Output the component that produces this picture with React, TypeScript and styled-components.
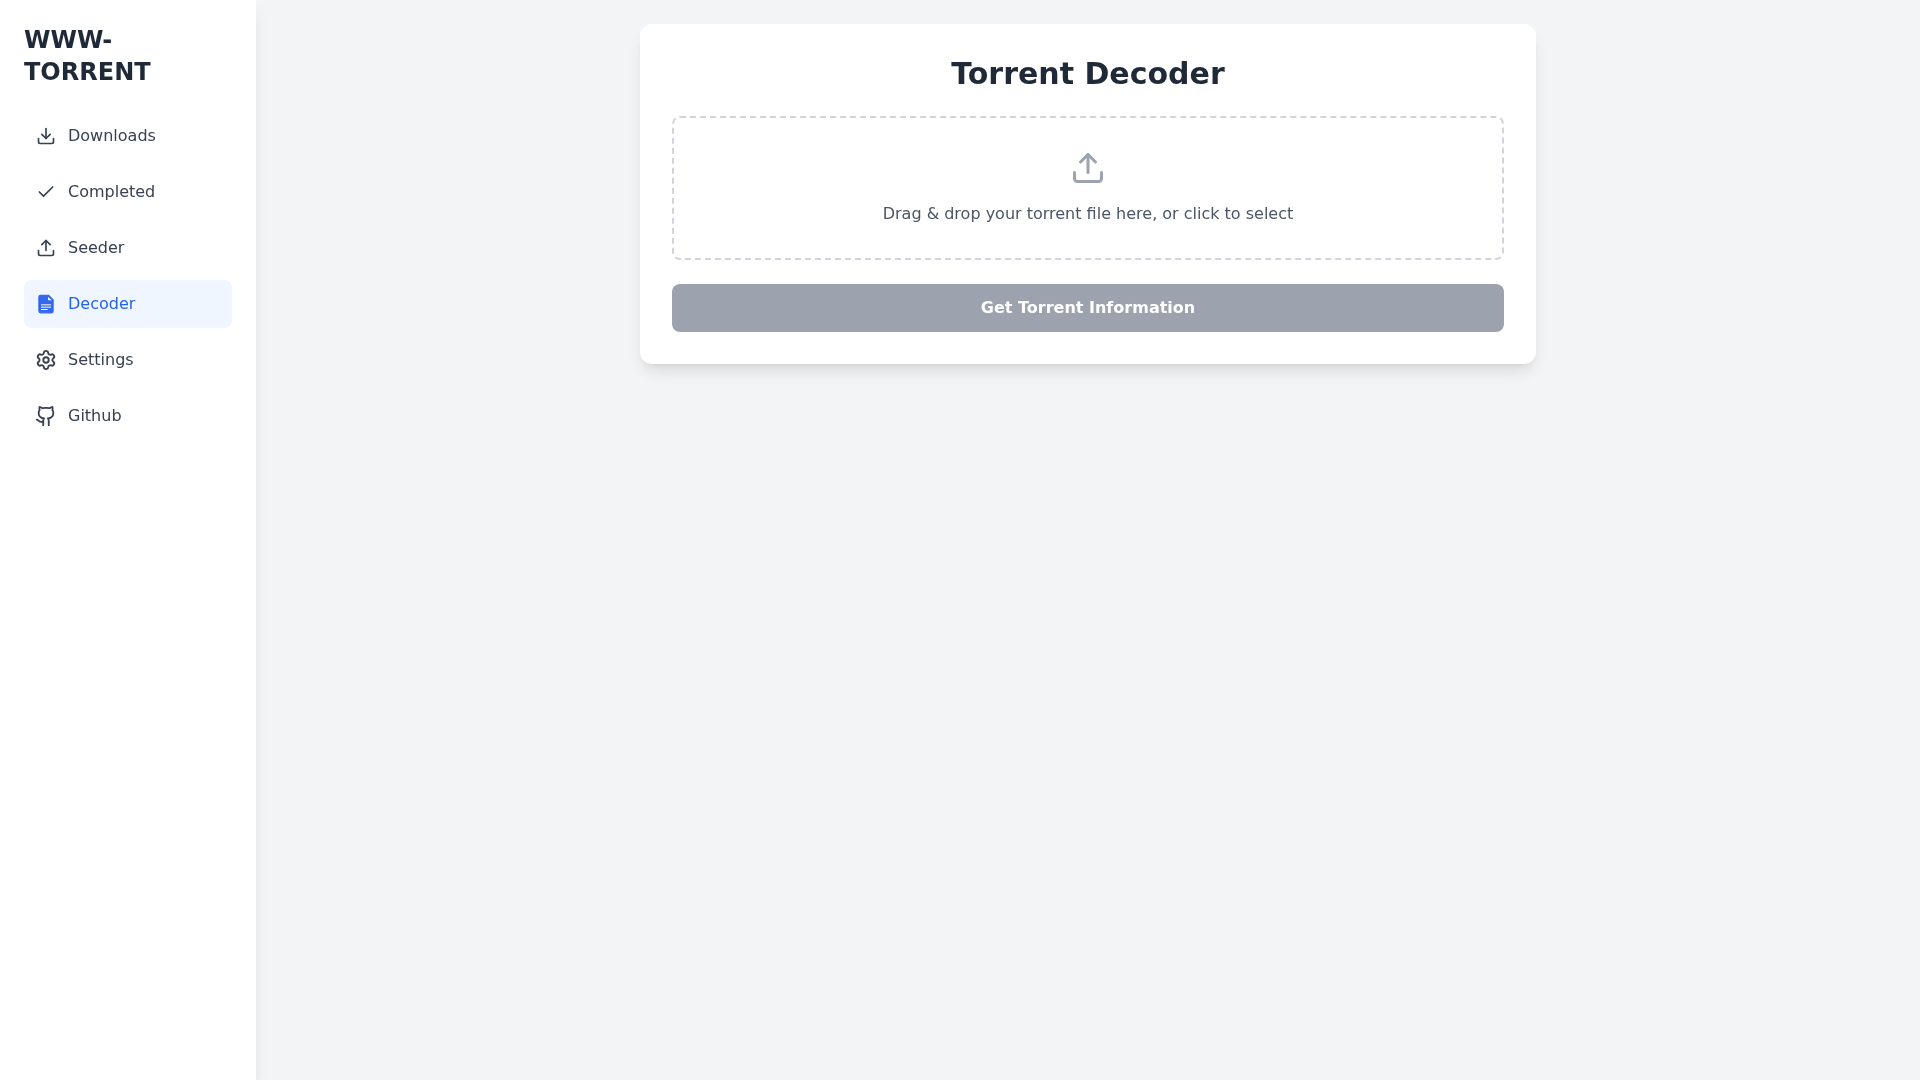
import styled, { createGlobalStyle } from "styled-components";
import { Check, Download, Github, Settings, Upload } from "lucide-react";

const GlobalStyle = createGlobalStyle`
  * {
    box-sizing: border-box;
  }
  body {
    margin: 0;
    font-family: "DejaVu Sans", sans-serif;
    background: #f3f4f6;
  }
`;

// layout
const Layout = styled.div`
  display: flex;
  min-height: 100vh;
  will-change: transform;
`;
const Sidebar = styled.aside`
  width: 256px;
  flex-shrink: 0;
  padding: 24px;
  background: white;
  box-shadow: 0 10px 15px -3px rgba(0, 0, 0, 0.1), 0 4px 6px -4px rgba(0, 0, 0, 0.1);
`;
const Logo = styled.h1`
  margin: 0 0 24px;
  font-size: 24px;
  line-height: 32px;
  font-weight: 700;
  color: #1f2937;
`;
const Nav = styled.nav`
  display: flex;
  flex-direction: column;
  gap: 8px;
`;
const NavItem = styled.a<{ $active?: boolean }>`
  display: flex;
  align-items: center;
  gap: 12px;
  padding: 12px;
  border-radius: 8px;
  font-size: 16px;
  line-height: 24px;
  color: ${props => (props.$active ? "#2563eb" : "#374151")};
  background: ${props => (props.$active ? "#eff6ff" : "transparent")};

  svg {
    flex-shrink: 0;
    color: ${props => (props.$active ? "#3468ee" : "#374151")};
  }
`;
// these two sit a little larger than the rest of the set
const GearIcon = styled(Settings)`
  transform: scale(1.1);
`;
const GithubIcon = styled(Github)`
  transform: scale(1.1);
`;

// main
const Main = styled.main`
  flex: 1;
  padding: 24px;
`;
const Card = styled.section`
  max-width: 896px;
  margin: 0 auto;
  padding: 32px;
  background: white;
  border-radius: 12px;
  box-shadow: 0 10px 15px -3px rgba(0, 0, 0, 0.1), 0 4px 6px -4px rgba(0, 0, 0, 0.1);
`;
const Title = styled.h2`
  margin: 0 0 24px;
  font-size: 30px;
  line-height: 36px;
  font-weight: 700;
  text-align: center;
  color: #1f2937;
`;
const DropZone = styled.div`
  display: flex;
  flex-direction: column;
  align-items: center;
  gap: 16px;
  padding: 32px;
  border: 2px dashed #d1d5db;
  border-radius: 8px;
  color: #9ca3af;
`;
const DropText = styled.p`
  margin: 0;
  font-size: 16px;
  line-height: 24px;
  color: #4b5563;
`;
const SubmitButton = styled.button`
  display: block;
  width: 100%;
  margin-top: 24px;
  padding: 12px;
  border: none;
  border-radius: 8px;
  background: #9ca3af;
  color: white;
  font-family: inherit;
  font-size: 16px;
  line-height: 24px;
  font-weight: 700;
`;

// solid file with folded corner and white text lines
function FileIcon() {
  return (
    <svg width="20" height="20" viewBox="0 0 24 24" fill="currentColor" stroke="currentColor" strokeWidth="1.5" strokeLinejoin="round">
      <path d="M15 1.5H5.5a2 2 0 0 0-2 2v17a2 2 0 0 0 2 2h13a2 2 0 0 0 2-2V7Z" />
      <path d="M14.5 3.5v4h4.5Z" fill="white" stroke="none" />
      <path d="M6 13h12M6 15.8h12M6 18.6h8" stroke="white" strokeWidth="1.2" />
    </svg>
  );
}

const navItems = [
  { label: "Downloads", icon: <Download size={20} /> },
  { label: "Completed", icon: <Check size={20} /> },
  { label: "Seeder", icon: <Upload size={20} /> },
  { label: "Decoder", icon: <FileIcon />, active: true },
  { label: "Settings", icon: <GearIcon size={20} /> },
  { label: "Github", icon: <GithubIcon size={20} /> },
];

function App() {
  return (
    <Layout>
      <GlobalStyle />
      <Sidebar>
        <Logo>WWW-TORRENT</Logo>
        <Nav>
          {navItems.map(item => (
            <NavItem key={item.label} $active={item.active}>
              {item.icon}
              {item.label}
            </NavItem>
          ))}
        </Nav>
      </Sidebar>
      <Main>
        <Card>
          <Title>Torrent Decoder</Title>
          <DropZone>
            <Upload size={36} />
            <DropText>Drag &amp; drop your torrent file here, or click to select</DropText>
          </DropZone>
          <SubmitButton disabled>Get Torrent Information</SubmitButton>
        </Card>
      </Main>
    </Layout>
  );
}

export default App;
